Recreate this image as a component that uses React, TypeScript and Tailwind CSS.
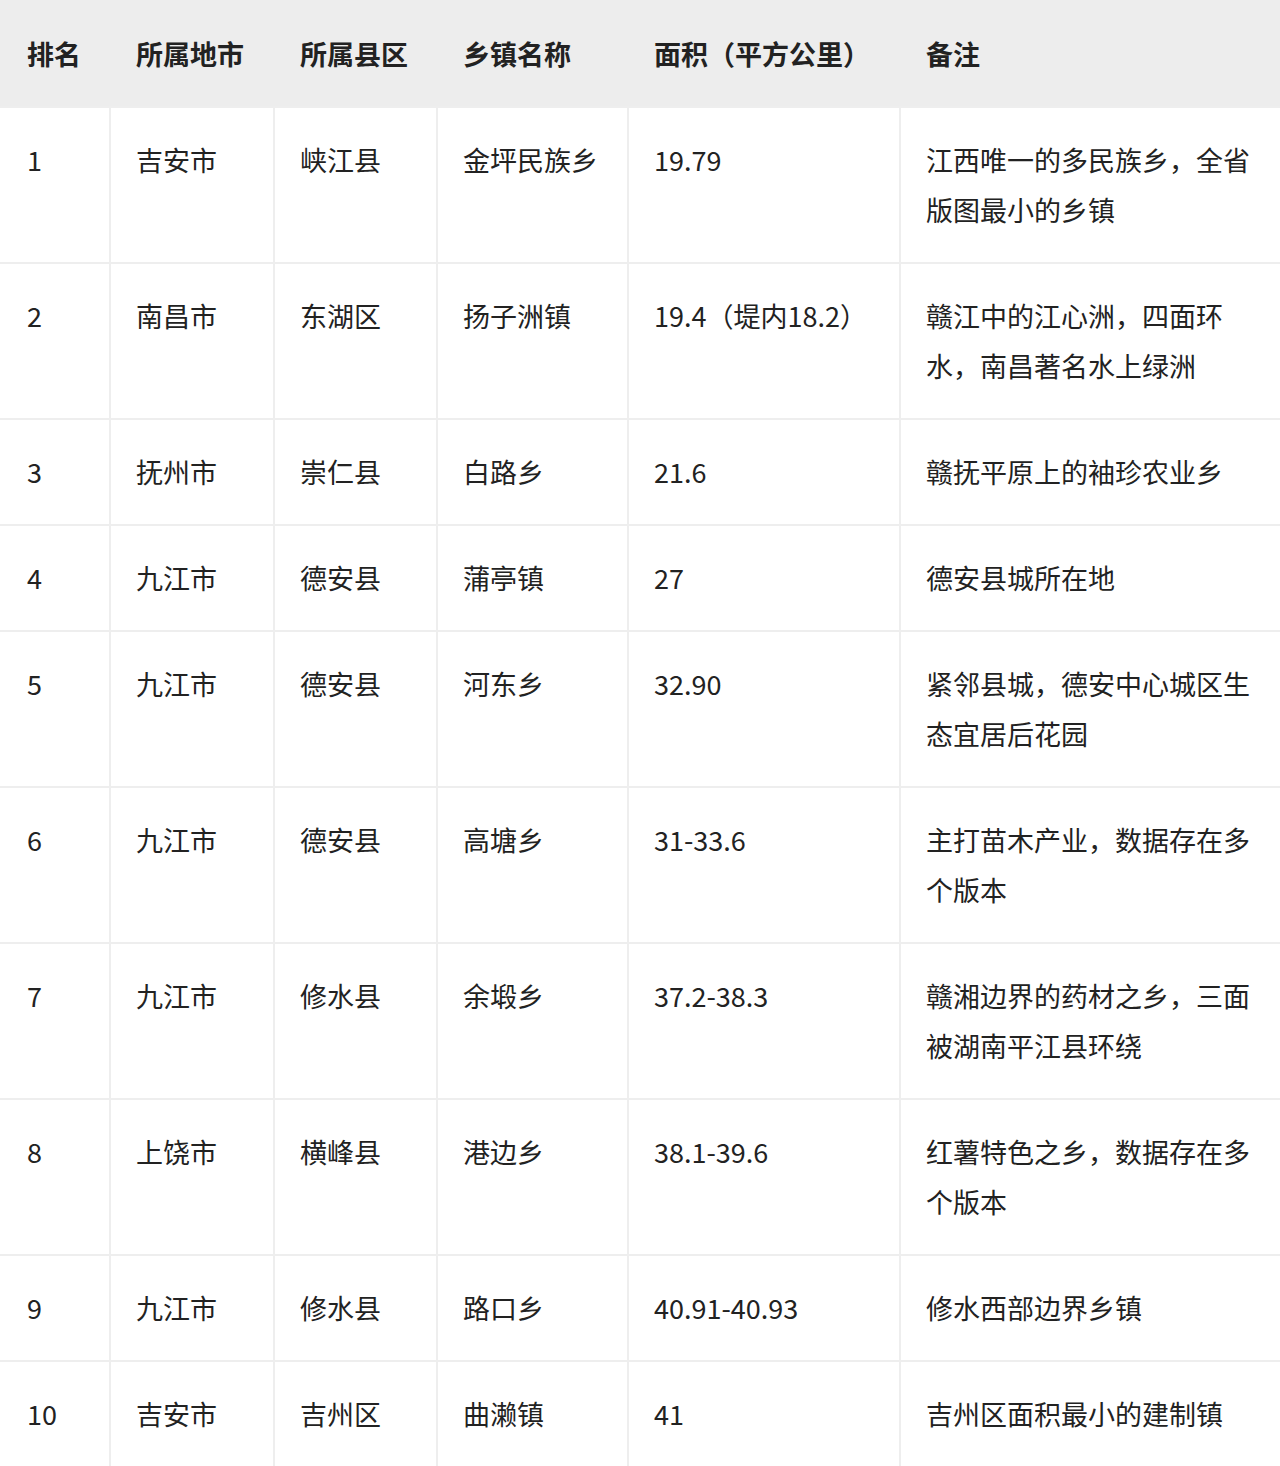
import React from "react";

const widths = ["w-[109px]", "w-[164px]", "w-[163px]", "w-[191px]", "w-[272px]", "flex-1"];

const headers = ["排名", "所属地市", "所属县区", "乡镇名称", "面积（平方公里）", "备注"];

const rows: string[][] = [
  ["1", "吉安市", "峡江县", "金坪民族乡", "19.79", "江西唯一的多民族乡，全省版图最小的乡镇"],
  ["2", "南昌市", "东湖区", "扬子洲镇", "19.4（堤内18.2）", "赣江中的江心洲，四面环水，南昌著名水上绿洲"],
  ["3", "抚州市", "崇仁县", "白路乡", "21.6", "赣抚平原上的袖珍农业乡"],
  ["4", "九江市", "德安县", "蒲亭镇", "27", "德安县城所在地"],
  ["5", "九江市", "德安县", "河东乡", "32.90", "紧邻县城，德安中心城区生态宜居后花园"],
  ["6", "九江市", "德安县", "高塘乡", "31-33.6", "主打苗木产业，数据存在多个版本"],
  ["7", "九江市", "修水县", "余塅乡", "37.2-38.3", "赣湘边界的药材之乡，三面被湖南平江县环绕"],
  ["8", "上饶市", "横峰县", "港边乡", "38.1-39.6", "红薯特色之乡，数据存在多个版本"],
  ["9", "九江市", "修水县", "路口乡", "40.91-40.93", "修水西部边界乡镇"],
  ["10", "吉安市", "吉州区", "曲濑镇", "41", "吉州区面积最小的建制镇"],
];

export default function App() {
  return (
    <div
      className="w-[1280px] bg-white text-[#222222] text-[27px] leading-[50px]"
      style={{ fontFamily: '"Noto Sans CJK SC", "Noto Sans", sans-serif' }}
    >
      <div className="flex bg-[#ededed] font-bold">
        {headers.map((h, i) => (
          <div
            key={i}
            className={`${widths[i]} ${i === 5 ? "min-w-0" : "shrink-0"} ${
              i === 0 ? "pl-[27px] pr-[26px]" : "px-[25px]"
            } pt-[29px] pb-[27px] ${i > 0 ? "border-l-2 border-transparent" : ""}`}
          >
            {h}
          </div>
        ))}
      </div>
      {rows.map((r, ri) => (
        <div key={ri} className="flex border-t-2 border-[#eeeeee]">
          {r.map((c, ci) => (
            <div
              key={ci}
              className={`${widths[ci]} ${ci === 5 ? "min-w-0" : "shrink-0"} ${
                ci === 0 ? "pl-[27px] pr-[26px]" : "px-[25px]"
              } py-[27px] ${ci > 0 ? "border-l-2 border-[#eeeeee]" : ""}`}
            >
              {c}
            </div>
          ))}
        </div>
      ))}
    </div>
  );
}
